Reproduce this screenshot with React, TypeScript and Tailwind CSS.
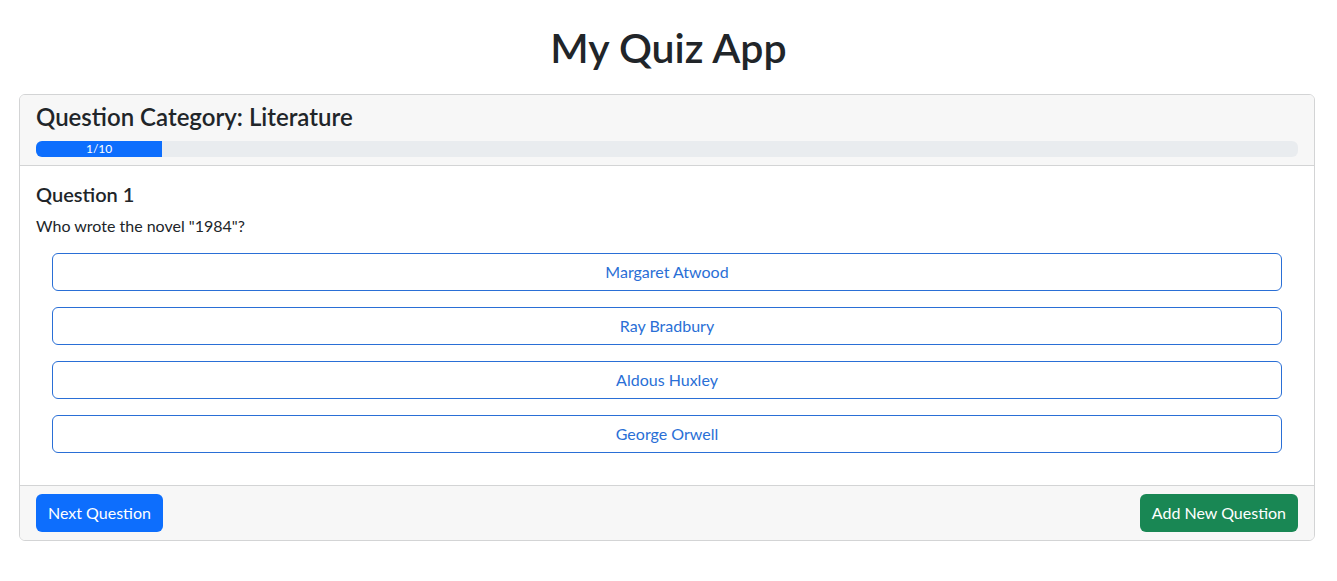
const answers = ["Margaret Atwood", "Ray Bradbury", "Aldous Huxley", "George Orwell"];

export default function App() {
  const current = 1;
  const total = 10;
  const pct = (current / total) * 100;

  return (
    <div className="min-h-[581px] bg-white text-[#212529] font-['Lato','Noto_Sans',sans-serif]">
      <h1 className="pt-[23px] pb-[22px] text-center text-[41px] font-semibold leading-[1.2]">
        My Quiz App
      </h1>

      <div className="ml-[19px] w-[1296px] rounded-md border border-[#d3d4d5] overflow-hidden">
        <div className="border-b border-[#d3d4d5] bg-[#f7f7f7] px-4 py-2">
          <h4 className="mb-[9px] text-[24px] font-semibold leading-[1.2]">
            Question Category: Literature
          </h4>
          <div className="flex h-4 overflow-hidden rounded-md bg-[#e9ecef]">
            <div
              className="flex items-center justify-center bg-[#0d6efd] text-[12px] leading-none text-white"
              style={{ width: `${pct}%` }}
            >
              {current}/{total}
            </div>
          </div>
        </div>

        <div className="p-4">
          <h5 className="mb-2 text-[20px] font-semibold leading-[1.2]">Question {current}</h5>
          <p className="mb-[15px] text-[16px] leading-6">Who wrote the novel "1984"?</p>
          <div className="mx-4 flex flex-col gap-4">
            {answers.map((a) => (
              <button
                key={a}
                className="h-[38px] rounded-md border border-[#2a6fd6] bg-white text-[16px] text-[#2a6fd6]"
              >
                {a}
              </button>
            ))}
          </div>
          <div className="h-4" />
        </div>

        <div className="flex items-center justify-between border-t border-[#d3d4d5] bg-[#f7f7f7] px-4 py-2">
          <button className="h-[38px] rounded-md bg-[#0d6efd] px-3 text-[16px] text-white">
            Next Question
          </button>
          <button className="h-[38px] rounded-md bg-[#198754] px-3 text-[16px] text-white">
            Add New Question
          </button>
        </div>
      </div>
    </div>
  );
}
